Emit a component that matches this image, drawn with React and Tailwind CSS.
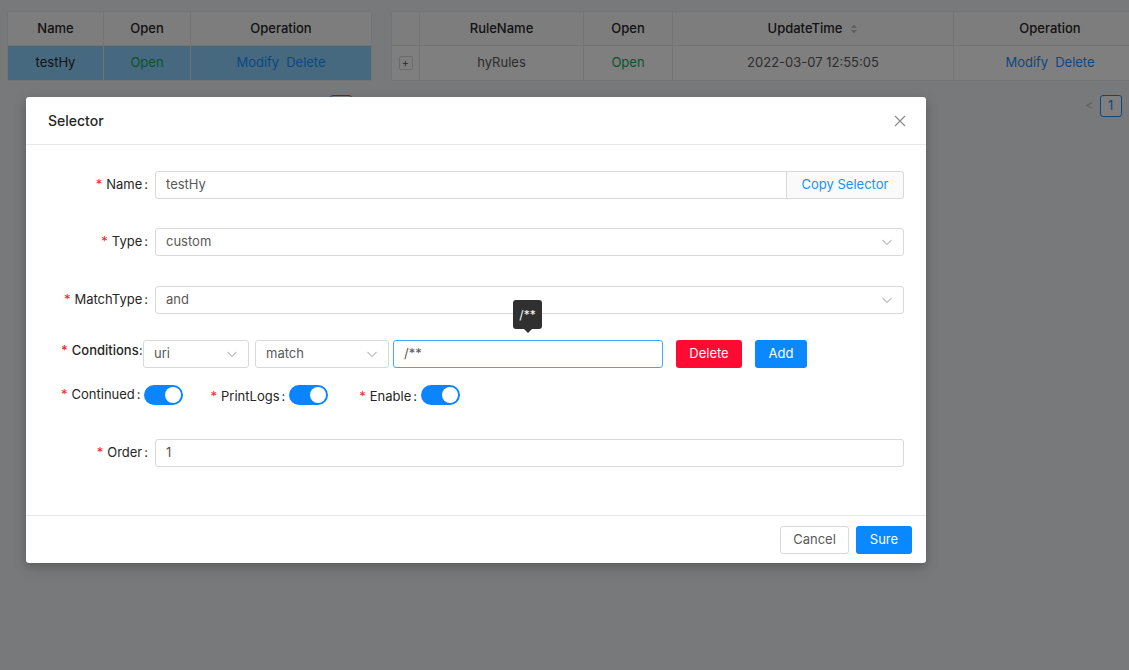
import React from 'react'

const font = { fontFamily: 'Inter, "Noto Sans", "Liberation Sans", sans-serif' }

function Chevron() {
  return (
    <svg className="w-3 h-3 text-[#bfbfbf]" viewBox="0 0 12 12" fill="none" stroke="currentColor" strokeWidth="1.1">
      <path d="M1.5 4l4.5 4.5L10.5 4" />
    </svg>
  )
}

function Switch() {
  return (
    <div className="w-[39px] h-[20px] rounded-full bg-[#0a84ff] relative shrink-0">
      <span className="absolute right-[2px] top-[2px] w-[16px] h-[16px] rounded-full bg-white"></span>
    </div>
  )
}

function Req({ children, bold }) {
  return (
    <span className={`text-[13px] text-[#262626] whitespace-nowrap ${bold ? 'font-medium' : ''}`}>
      <span className="text-[#f5222d] mr-[4px]">*</span>
      {children}
    </span>
  )
}

function FormRow({ label, children }) {
  return (
    <div className="flex items-center h-[28px]">
      <div className="w-[129px] shrink-0 flex justify-end pr-[7px]">
        <Req>{label}<span className="ml-[2px]">:</span></Req>
      </div>
      <div className="flex-1 flex h-full">{children}</div>
    </div>
  )
}

function SelectBox({ value, className = '' }) {
  return (
    <div className={`h-[28px] border border-[#d9d9d9] rounded-[3px] bg-white flex items-center justify-between px-[10px] text-[13px] text-[#595959] ${className}`}>
      <span>{value}</span>
      <Chevron />
    </div>
  )
}

function PageBehind() {
  return (
    <div className="flex gap-[19px] pt-[11px] pl-[7px] text-[13px] text-[#262626]">
      <div className="w-[365px] shrink-0">
        <div className="border border-[#e8e8e8] rounded-t-[3px]">
          <div className="flex h-[34px] bg-[#fafafa] border-b border-[#e8e8e8] font-medium">
            <div className="w-[96px] flex items-center justify-center border-r border-[#e8e8e8]">Name</div>
            <div className="w-[87px] flex items-center justify-center border-r border-[#e8e8e8]">Open</div>
            <div className="flex-1 flex items-center justify-center">Operation</div>
          </div>
          <div className="flex h-[34px] bg-[#8cd3ff]">
            <div className="w-[96px] flex items-center justify-center border-r border-[#e8e8e8]">testHy</div>
            <div className="w-[87px] flex items-center justify-center border-r border-[#e8e8e8] text-[#17a35b]">Open</div>
            <div className="flex-1 flex items-center justify-center gap-[7px] text-[#1890ff]">
              <span>Modify</span><span>Delete</span>
            </div>
          </div>
        </div>
        <div className="flex justify-end mt-[14px] pr-[20px]">
          <div className="w-[22px] h-[22px] border border-[#1890ff] rounded-[3px] bg-white flex items-center justify-center text-[#1890ff]">1</div>
        </div>
      </div>
      <div className="w-[760px] shrink-0">
        <div className="border border-[#e8e8e8] rounded-t-[3px] bg-white">
          <div className="flex h-[34px] bg-[#fafafa] border-b border-[#e8e8e8] font-medium">
            <div className="w-[28px] border-r border-[#e8e8e8]"></div>
            <div className="w-[164px] flex items-center justify-center border-r border-[#e8e8e8]">RuleName</div>
            <div className="w-[89px] flex items-center justify-center border-r border-[#e8e8e8]">Open</div>
            <div className="w-[281px] flex items-center justify-center border-r border-[#e8e8e8] gap-[8px]">
              UpdateTime
              <svg className="w-[8px] h-[10px] text-[#bfbfbf]" viewBox="0 0 8 10" fill="currentColor">
                <path d="M4 0.5L7 4H1z" />
                <path d="M4 9.5L1 6h6z" />
              </svg>
            </div>
            <div className="flex-1 flex items-center justify-center pr-[4px]">Operation</div>
          </div>
          <div className="flex h-[34px]">
            <div className="w-[28px] flex items-center justify-center border-r border-[#e8e8e8]">
              <div className="w-[14px] h-[14px] border border-[#d9d9d9] rounded-[2px] flex items-center justify-center text-[11px] leading-none text-[#595959]">+</div>
            </div>
            <div className="w-[164px] flex items-center justify-center border-r border-[#e8e8e8] text-[#595959]">hyRules</div>
            <div className="w-[89px] flex items-center justify-center border-r border-[#e8e8e8] text-[#17a35b]">Open</div>
            <div className="w-[281px] flex items-center justify-center border-r border-[#e8e8e8] text-[#595959]">2022-03-07 12:55:05</div>
            <div className="flex-1 flex items-center justify-center gap-[7px] text-[#1890ff] pr-[4px]">
              <span>Modify</span><span>Delete</span>
            </div>
          </div>
        </div>
        <div className="flex items-center mt-[14px] pl-[694px] gap-[6px]">
          <span className="text-[#bfbfbf] text-[13px]">&lt;</span>
          <div className="w-[22px] h-[22px] border border-[#1890ff] rounded-[3px] bg-white flex items-center justify-center text-[#1890ff]">1</div>
        </div>
      </div>
    </div>
  )
}

function Modal() {
  return (
    <div className="absolute left-[26px] top-[97px] w-[900px] bg-white rounded-[3px] shadow-[0_4px_12px_rgba(0,0,0,0.25)]">
      {/* header */}
      <div className="h-[48px] border-b border-[#e8e8e8] flex items-center justify-between pl-[22px] pr-[20px]">
        <span className="text-[14px] font-medium text-[#262626]">Selector</span>
        <svg className="w-[12px] h-[12px] text-[#8c8c8c]" viewBox="0 0 12 12" stroke="currentColor" strokeWidth="1.2" fill="none">
          <path d="M1 1l10 10M11 1L1 11" />
        </svg>
      </div>

      {/* body */}
      <div className="pt-[26px] pb-[48px] pr-[22px] flex flex-col">
        <FormRow label="Name">
          <div className="flex-1 border border-[#d9d9d9] rounded-l-[3px] flex items-center px-[10px] text-[13px] text-[#595959]">testHy</div>
          <div className="w-[117px] border border-l-0 border-[#d9d9d9] rounded-r-[3px] bg-[#fafafa] flex items-center justify-center text-[13px] text-[#1890ff]">Copy Selector</div>
        </FormRow>

        <div className="mt-[29px]">
          <FormRow label="Type">
            <SelectBox value="custom" className="flex-1" />
          </FormRow>
        </div>

        <div className="mt-[30px]">
          <FormRow label="MatchType">
            <SelectBox value="and" className="flex-1" />
          </FormRow>
        </div>

        <div className="mt-[26px] flex items-start pl-[35px]">
          <div className="w-[82px] leading-[18px]">
            <Req bold>Conditions:</Req>
          </div>
          <div className="flex gap-[6px]">
            <SelectBox value="uri" className="w-[106px]" />
            <SelectBox value="match" className="w-[134px]" />
          </div>
          <div className="relative ml-[4px]">
            <div className="w-[270px] h-[28px] border border-[#40a9ff] rounded-[3px] flex items-center px-[10px] text-[13px] text-[#595959]">/**</div>
            <div className="absolute left-[120px] top-[-40px] w-[29px] h-[29px] bg-[#303030] rounded-[3px] flex items-center justify-center text-[12px] text-white">
              /**
              <span className="absolute left-[11px] bottom-[-4px] w-0 h-0 border-l-[4px] border-r-[4px] border-t-[4px] border-l-transparent border-r-transparent border-t-[#303030]"></span>
            </div>
          </div>
          <div className="ml-[13px] w-[66px] h-[28px] rounded-[3px] bg-[#ff0a33] text-white text-[13px] flex items-center justify-center">Delete</div>
          <div className="ml-[13px] w-[52px] h-[28px] rounded-[3px] bg-[#0a88ff] text-white text-[13px] flex items-center justify-center">Add</div>
        </div>

        <div className="mt-[17px] flex items-center h-[20px] pl-[35px]">
          <Req>Continued<span className="ml-[2px]">:</span></Req>
          <div className="ml-[3px]"><Switch /></div>
          <div className="ml-[28px]"><Req>PrintLogs<span className="ml-[2px]">:</span></Req></div>
          <div className="ml-[4px]"><Switch /></div>
          <div className="ml-[31px]"><Req>Enable<span className="ml-[2px]">:</span></Req></div>
          <div className="ml-[4px]"><Switch /></div>
        </div>

        <div className="mt-[34px]">
          <FormRow label="Order">
            <div className="flex-1 border border-[#d9d9d9] rounded-[3px] flex items-center px-[10px] text-[13px] text-[#595959]">1</div>
          </FormRow>
        </div>
      </div>

      {/* footer */}
      <div className="h-[48px] border-t border-[#e8e8e8] flex items-center justify-end gap-[7px] pr-[14px]">
        <div className="w-[69px] h-[28px] border border-[#d9d9d9] rounded-[3px] flex items-center justify-center text-[13px] text-[#595959]">Cancel</div>
        <div className="w-[56px] h-[28px] rounded-[3px] bg-[#0a88ff] flex items-center justify-center text-[13px] text-white">Sure</div>
      </div>
    </div>
  )
}

export default function App() {
  return (
    <div className="w-[1129px] h-[670px] relative overflow-hidden bg-[#f0f2f5]" style={font}>
      <PageBehind />
      <div className="absolute inset-0 bg-black/50"></div>
      <Modal />
    </div>
  )
}
